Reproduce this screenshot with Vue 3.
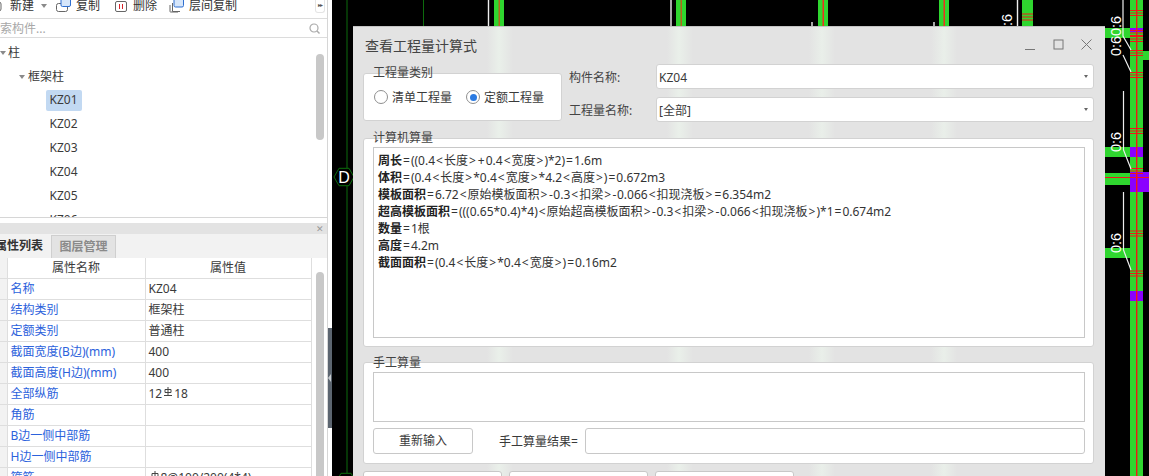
<script setup>
const treeItems = ['KZ01', 'KZ02', 'KZ03', 'KZ04', 'KZ05', 'KZ06']
const props = [
  ['名称', 'KZ04'],
  ['结构类别', '框架柱'],
  ['定额类别', '普通柱'],
  ['截面宽度(B边)(mm)', '400'],
  ['截面高度(H边)(mm)', '400'],
  ['全部纵筋', 'rebar18'],
  ['角筋', ''],
  ['B边一侧中部筋', ''],
  ['H边一侧中部筋', ''],
  ['箍筋', 'stirrup']
]
const formulas = [
  ['周长', '=((0.4<长度>+0.4<宽度>)*2)=1.6m'],
  ['体积', '=(0.4<长度>*0.4<宽度>*4.2<高度>)=0.672m3'],
  ['模板面积', '=6.72<原始模板面积>-0.3<扣梁>-0.066<扣现浇板>=6.354m2'],
  ['超高模板面积', '=(((0.65*0.4)*4)<原始超高模板面积>-0.3<扣梁>-0.066<扣现浇板>)*1=0.674m2'],
  ['数量', '=1根'],
  ['高度', '=4.2m'],
  ['截面面积', '=(0.4<长度>*0.4<宽度>)=0.16m2']
]
const tokens = (s) => s.split(/([<>=+-])/).filter(Boolean)
const opClass = (t) => (t === '-' ? 'minus' : /^[<>=+]$/.test(t) ? 'op' : '')
const greenCols = [[494, 10, 499, '#b5651d'], [676, 10, 681, '#b5651d'], [818, 10, 823, '#f03020'], [939, 10, 944, '#f03020']]
const bandsY = [10, 30, 36, 50, 72, 128, 168]
const hexPoints = (cx, cy, r) => `${cx - r},${cy} ${cx - r / 2},${cy - r * 0.87} ${cx + r / 2},${cy - r * 0.87} ${cx + r},${cy} ${cx + r / 2},${cy + r * 0.87} ${cx - r / 2},${cy + r * 0.87}`
</script>

<template>
  <div class="root">
    <aside class="left">
      <div class="toolbar">
        <svg class="ico first" width="15" height="15" viewBox="0 0 15 15"><rect x="1" y="2" width="12" height="9" rx="2" fill="none" stroke="#666" /></svg>
        <span class="tl">新建</span>
        <i class="caret tcaret"></i>
        <svg class="ico copy" width="15" height="14" viewBox="0 0 15 14"><rect x="0.5" y="3.5" width="11" height="8" rx="2" fill="none" stroke="#666" /><rect x="5" y="-3" width="9.5" height="9.5" rx="1.5" fill="#d6e6fa" stroke="#2f6fd0" /></svg>
        <span class="tl">复制</span>
        <svg class="ico del" width="13" height="14" viewBox="0 0 13 14"><rect x="0.5" y="1.5" width="11" height="10" rx="1.5" fill="none" stroke="#666" /><path d="M4.5 4v5M7.5 4v5" stroke="#d8232a" stroke-width="1" /></svg>
        <span class="tl">删除</span>
        <svg class="ico lcopy" width="15" height="14" viewBox="0 0 15 14"><path d="M3.5 3v8.5H11M1 5v6.5a.5.5 0 0 0 .5.5H9" fill="none" stroke="#666" /><rect x="5" y="-3" width="9.5" height="10" rx="1.5" fill="#d6e6fa" stroke="#2f6fd0" /></svg>
        <span class="tl">层间复制</span>
        <span class="spacer"></span>
        <span class="more">▸▸</span>
      </div>
      <div class="search">
        <span class="ph">搜索构件...</span>
        <svg width="11" height="11" viewBox="0 0 11 11"><circle cx="5" cy="5" r="4" fill="none" stroke="#aaa" stroke-width="1.2" /><path d="M8 8l2.5 2.5" stroke="#aaa" stroke-width="1.4" /></svg>
      </div>
      <div class="tree">
        <div class="scroll tree-scroll"></div>
        <div class="row lv0"><i class="caret"></i><span>柱</span></div>
        <div class="row lv1"><i class="caret"></i><span>框架柱</span></div>
        <div v-for="(t, i) in treeItems" :key="t" class="row lv2"><span class="node" :class="{ sel: i === 0 }">{{ t }}</span></div>
      </div>
      <div class="gap"></div>
      <div class="strip"><span class="x">✕</span></div>
      <div class="tabs">
        <div class="tab active">属性列表</div>
        <div class="tab off">图层管理</div>
      </div>
      <div class="tablewrap">
        <table>
          <colgroup><col class="c0" /><col class="c1" /><col class="c2" /></colgroup>
          <thead><tr><th></th><th>属性名称</th><th>属性值</th></tr></thead>
          <tbody>
            <tr v-for="p in props" :key="p[0]">
              <td class="idx"></td>
              <td class="pn">{{ p[0] }}</td>
              <td class="pv">
                <template v-if="p[1] === 'rebar18'">12<svg class="rb" width="10" height="10" viewBox="0 0 10 10"><path d="M5 0v9M2 2.5h6v3H2zM1 8.5h8" fill="none" stroke="#444" /></svg>18</template>
                <template v-else-if="p[1] === 'stirrup'"><svg class="rb" width="10" height="10" viewBox="0 0 10 10"><path d="M5 0v9M2 2.5h6v3H2zM1 8.5h8" fill="none" stroke="#444" /></svg>8@100/200(4*4)</template>
                <template v-else>{{ p[1] }}</template>
              </td>
            </tr>
          </tbody>
        </table>
        <div class="scroll table-scroll"></div>
      </div>
    </aside>

    <div class="splitter"><i></i></div>

    <svg class="cad" viewBox="332 0 817 476" width="817" height="476">
      <rect x="332" y="0" width="817" height="476" fill="#000" />
      <path d="M347 0V168M347 186V476M423.5 0V30" stroke="#0d6b0d" stroke-width="1" />
      <polygon :points="hexPoints(344, 177, 10)" fill="#000" stroke="#0b6f0b" />
      <text x="344" y="183" class="cad-d">D</text>
      <polygon :points="hexPoints(346, 482, 10)" fill="#000" stroke="#0b6f0b" />
      <path d="M488.5 0V30M671 0V30M812 22V30M934 22V30M1017.5 0V30" stroke="#eee" stroke-width="1.4" />
      <g v-for="c in greenCols" :key="c[0]">
        <rect :x="c[0]" y="0" :width="c[1]" height="30" fill="#2fd62f" />
        <rect :x="c[2] - 0.5" y="0" width="1.5" height="30" :fill="c[3]" />
      </g>
      <rect x="1022" y="0" width="11" height="30" fill="#2fd62f" />
      <path d="M1022 14h11M1022 17h11M1022 20h11" stroke="#f01818" stroke-width="1.2" />
      <text transform="translate(1012 34) rotate(-90)" class="cad-t">0:6</text>

      <rect x="1105" y="28" width="25" height="10" fill="#2fd62f" />
      <rect x="1105" y="147" width="25" height="10" fill="#2fd62f" />
      <rect x="1105" y="173" width="25" height="12" fill="#2fd62f" />
      <rect x="1105" y="248" width="25" height="10" fill="#2fd62f" />
      <rect x="1143" y="51" width="6" height="9" fill="#2fd62f" />
      <rect x="1130" y="0" width="13" height="476" fill="#2fd62f" />
      <rect x="1130" y="28" width="13" height="4" fill="#8a00ff" />
      <rect x="1130" y="147" width="13" height="10" fill="#8a00ff" />
      <rect x="1130" y="172" width="19" height="20" fill="#8a00ff" />
      <rect x="1130" y="291" width="13" height="10" fill="#8a00ff" />
      <path d="M1105 177.5h44" stroke="#f01818" stroke-width="1" />
      <rect x="1136" y="0" width="1.4" height="476" fill="#f01818" />
      <g v-for="y in bandsY" :key="y">
        <path :d="`M1130 ${y + 0.5}h13M1130 ${y + 3}h13M1130 ${y + 5.5}h13`" stroke="#f01818" stroke-width="1.2" />
      </g>
      <path d="M1130 231h13M1130 233.5h13M1130 236h13M1130 271h13M1130 273.5h13M1130 276h13" stroke="#f01818" stroke-width="1.2" />
      <path d="M1123 0V36L1131 50M1123 55L1131 72M1123.5 91V150L1131 169M1123.5 192V250L1131 270" fill="none" stroke="#eee" stroke-width="1.2" />
      <text transform="translate(1121 36) rotate(-90)" class="cad-t">0:6</text>
      <text transform="translate(1121 56) rotate(-90)" class="cad-t">0:6</text>
      <text transform="translate(1121 152) rotate(-90)" class="cad-t">0:6</text>
      <text transform="translate(1121 253) rotate(-90)" class="cad-t">0:6</text>
    </svg>

    <section class="dialog">
      <header class="title">
        <span>查看工程量计算式</span>
        <div class="winbtns">
          <svg width="11" height="11" viewBox="0 0 11 11"><path d="M0 10.5h10" stroke="#777" /></svg>
          <svg width="11" height="11" viewBox="0 0 11 11"><rect x="1" y="1" width="9" height="9" fill="none" stroke="#777" /></svg>
          <svg width="11" height="11" viewBox="0 0 11 11"><path d="M.5.5l10 10M10.5.5l-10 10" stroke="#777" /></svg>
        </div>
      </header>

      <div class="top">
        <div class="group qty">
          <span class="legend">工程量类别</span>
          <label class="radio"><i class="dot"></i>清单工程量</label>
          <label class="radio"><i class="dot on"></i>定额工程量</label>
        </div>
        <div class="fields">
          <div class="field"><span class="flabel">构件名称:</span><div class="select">KZ04<i class="scaret"></i></div></div>
          <div class="field"><span class="flabel">工程量名称:</span><div class="select">[全部]<i class="scaret"></i></div></div>
        </div>
      </div>

      <div class="group calc">
        <span class="legend">计算机算量</span>
        <div class="box formula">
          <div v-for="f in formulas" :key="f[0]" class="line"><b>{{ f[0] }}</b><span v-for="(t, i) in tokens(f[1])" :key="i" :class="opClass(t)">{{ t }}</span></div>
        </div>
      </div>

      <div class="group manual">
        <span class="legend legend-low">手工算量</span>
        <div class="box manual-box"></div>
        <div class="manual-row">
          <div class="btn reset">重新输入</div>
          <span class="mlabel">手工算量结果=</span>
          <div class="minput"></div>
        </div>
      </div>

      <div class="bottom">
        <div class="btn bbtn"></div>
        <div class="btn bbtn"></div>
        <div class="btn bbtn"></div>
      </div>
    </section>
  </div>
</template>

<style scoped>
.root {
  position: relative;
  display: flex;
  width: 1149px;
  height: 476px;
  overflow: hidden;
  background: #000;
  font-family: "Noto Sans", "Noto Sans CJK SC", sans-serif;
  font-size: 12px;
  color: #3a3a3a;
}
.left {
  flex: 0 0 328px;
  width: 328px;
  height: 476px;
  background: #fff;
  border-right: 1px solid #d6d6d6;
  box-sizing: border-box;
  overflow: hidden;
  display: flex;
  flex-direction: column;
}
.toolbar {
  flex: 0 0 19px;
  height: 19px;
  box-sizing: border-box;
  border-bottom: 1px solid #dcdcdc;
  display: flex;
  align-items: flex-start;
  overflow: hidden;
  padding-right: 2px;
}
.tl { line-height: 11px; margin-top: 0; white-space: nowrap; font-size: 12px; color: #333; }
.ico { flex: none; }
.first { margin-left: -12px; margin-right: 7px; }
.copy { margin-left: 9px; margin-right: 5px; }
.del { margin-left: 15px; margin-right: 5px; }
.lcopy { margin-left: 12px; margin-right: 5px; }
.tcaret { margin: 4px 0 0 7px; }
.spacer { flex: 1; }
.more {
  width: 10px; height: 13px; box-sizing: border-box;
  border: 1px solid #e4e4e4; border-top: 0; border-radius: 0 0 3px 3px;
  font-size: 6px; line-height: 10px; text-align: center; color: #555; letter-spacing: -1px;
}
.search {
  flex: 0 0 19px;
  height: 19px;
  box-sizing: border-box;
  border-bottom: 1px solid #dcdcdc;
  display: flex;
  align-items: center;
  justify-content: space-between;
  padding-right: 7px;
}
.ph { margin-left: -12px; color: #a8a8a8; font-size: 12px; }
.tree {
  position: relative;
  flex: 0 0 180px;
  height: 180px;
  box-sizing: border-box;
  padding-top: 3px;
  border-bottom: 1px solid #d6d6d6;
  overflow: hidden;
}
.row { height: 24px; line-height: 24px; display: flex; align-items: center; color: #3a3a3a; }
.lv0 { padding-left: 0; }
.lv1 { padding-left: 19px; }
.lv2 { padding-left: 46px; align-items: flex-start; padding-top: 1px; box-sizing: border-box; }
.lv0 span { margin-left: 2px; }
.lv1 span { margin-left: 3px; }
.caret {
  display: inline-block; flex: none; width: 0; height: 0;
  border-left: 3.5px solid transparent; border-right: 3.5px solid transparent; border-top: 4px solid #8a8a8a;
}
.node { padding: 0 4px 0 3.5px; height: 21px; line-height: 20px; border-radius: 2px; }
.node.sel { background: #c2d9f2; }
.scroll { position: absolute; width: 8px; background: #c8c8c8; border-radius: 4px; }
.tree-scroll { left: 316px; top: 16px; height: 86px; }
.gap { flex: 0 0 5px; }
.strip {
  flex: 0 0 11px; height: 11px; background: #e3e3e3; display: flex; justify-content: flex-end; align-items: center; padding-right: 3px;
}
.x { font-size: 9px; line-height: 11px; color: #999; }
.tabs {
  flex: 0 0 24px; height: 24px; box-sizing: border-box; padding-top: 1px;
  display: flex; background: #f2f2f2;
}
.tab { height: 23px; line-height: 22px; box-sizing: border-box; text-align: center; font-size: 12px; }
.active { width: 51px; direction: rtl; overflow: hidden; white-space: nowrap; font-weight: 700; padding-right: 8px; color: #333; }
.off { width: 65px; background: #e3e3e3; border: 1px solid #cfcfcf; border-bottom: 0; color: #8a8a8a; font-weight: 700; }
.tablewrap { position: relative; flex: 1; overflow: hidden; }
table {
  table-layout: fixed; width: 311px; border-collapse: collapse; color: #3a3a3a; font-size: 12px;
}
.c0 { width: 7px; }
.c1 { width: 138px; }
.c2 { width: 166px; }
th, td {
  height: 21px; box-sizing: border-box; padding: 0; border: 1px solid #dedede; border-top: 0;
  font-weight: 400; line-height: 19px; white-space: nowrap; overflow: hidden;
}
th { height: 20px; text-align: center; }
th:first-child, .idx { background: #f2f2f2; border-left: 0; }
.pn { padding-left: 3px; color: #2c62dc; }
.pv { padding-left: 3px; }
.rb { margin: 0 1px; vertical-align: 1px; }
.table-scroll { left: 316px; top: 14px; bottom: -20px; }
.splitter {
  flex: 0 0 4px; width: 4px; height: 476px; background: #fff; position: relative;
}
.splitter i {
  display: block; position: absolute; left: 0; top: 328px; width: 4px; height: 100px; background: #5c6570;
}
.splitter i::after {
  content: ""; position: absolute; left: 0; top: 46px; width: 0; height: 0;
  border-top: 4px solid transparent; border-bottom: 4px solid transparent; border-right: 3px solid #c8ccd0;
}
.cad { flex: none; display: block; }
.cad-d { font: 400 16px "Liberation Sans", sans-serif; fill: #fff; text-anchor: middle; }
.cad-t { font: 400 14.5px "Liberation Sans", sans-serif; fill: #fff; }
.dialog {
  position: absolute;
  left: 353px;
  top: 26px;
  width: 752px;
  height: 470px;
  box-sizing: border-box;
  padding: 0 11px 0 10px;
  border-top: 1px solid #c4c4c4;
  background:
    linear-gradient(90deg,
      transparent 134px, rgba(236, 244, 236, .75) 146px, transparent 160px,
      transparent 314px, rgba(236, 244, 236, .75) 326px, transparent 340px,
      transparent 456px, rgba(236, 244, 236, .7) 469px, transparent 482px,
      transparent 578px, rgba(236, 244, 236, .7) 591px, transparent 604px),
    #e3e3e3;
  display: flex;
  flex-direction: column;
}
.title {
  flex: 0 0 37px;
  height: 37px;
  display: flex;
  align-items: center;
  justify-content: space-between;
  font-size: 14px;
  color: #444;
  padding-left: 2px;
  padding-bottom: 2px;
  box-sizing: border-box;
}
.winbtns { display: flex; gap: 17px; margin-right: 2px; align-items: center; }
.top { display: flex; height: 57px; flex: none; }
.group {
  position: relative;
  background: #fff;
  border: 1px solid #d2d2d2;
  border-radius: 3px;
  box-sizing: border-box;
}
.legend {
  position: absolute; left: 9px; top: -9px; line-height: 16px; color: #444; font-size: 12px; white-space: nowrap;
}
.legend-low { top: -8px; }
.qty {
  width: 199px; height: 48px; margin-top: 9px; flex: none;
  display: flex; align-items: center; gap: 14px; padding: 0 0 0 10px;
}
.radio { display: flex; align-items: center; gap: 4px; white-space: nowrap; color: #3a3a3a; }
.dot {
  display: block; width: 14px; height: 14px; box-sizing: border-box; border: 1px solid #8f8f8f; border-radius: 50%; background: #fff; position: relative;
}
.dot.on::after {
  content: ""; position: absolute; left: 2.5px; top: 2.5px; width: 7px; height: 7px; border-radius: 50%; background: #2a7ae2;
}
.fields { flex: 1; margin-left: 7px; display: flex; flex-direction: column; gap: 8px; }
.field { display: flex; align-items: center; height: 25px; }
.flabel { flex: 0 0 87px; color: #444; }
.select {
  position: relative; flex: 1; height: 25px; line-height: 25px; box-sizing: border-box;
  background: #fff; border: 1px solid #d2d2d2; border-radius: 3px; padding-left: 2px; color: #3a3a3a;
}
.scaret {
  position: absolute; right: 5px; top: 10px; width: 0; height: 0;
  border-left: 2.5px solid transparent; border-right: 2.5px solid transparent; border-top: 3.5px solid #666;
}
.calc { margin-top: 17px; height: 209px; flex: none; padding: 8px 8px 8px 9px; }
.box { background: #fff; border: 1px solid #c8c8c8; box-sizing: border-box; }
.formula { height: 191px; padding: 4px 0 0 4px; color: #333; }
.line { height: 17px; line-height: 17px; white-space: nowrap; font-size: 12px; }
.line b { font-weight: 700; color: #222; }
.op { margin: 0 1px; }
.minus { margin: 0 0.5px; }
.manual { margin-top: 15px; height: 102px; flex: none; padding: 9px 8px 0 9px; }
.manual-box { height: 50px; }
.manual-row { display: flex; align-items: center; margin-top: 6px; height: 26px; }
.btn { background: #fff; border: 1px solid #c8c8c8; border-radius: 3px; box-sizing: border-box; }
.reset { width: 100px; height: 26px; line-height: 24px; text-align: center; color: #3a3a3a; }
.mlabel { margin-left: 26px; width: 86px; white-space: nowrap; color: #3a3a3a; }
.minput { flex: 1; height: 26px; border: 1px solid #c8c8c8; border-radius: 3px; box-sizing: border-box; background: #fff; }
.bottom { display: flex; gap: 7px; margin-top: 7px; }
.bbtn { width: 139px; height: 26px; }
</style>
